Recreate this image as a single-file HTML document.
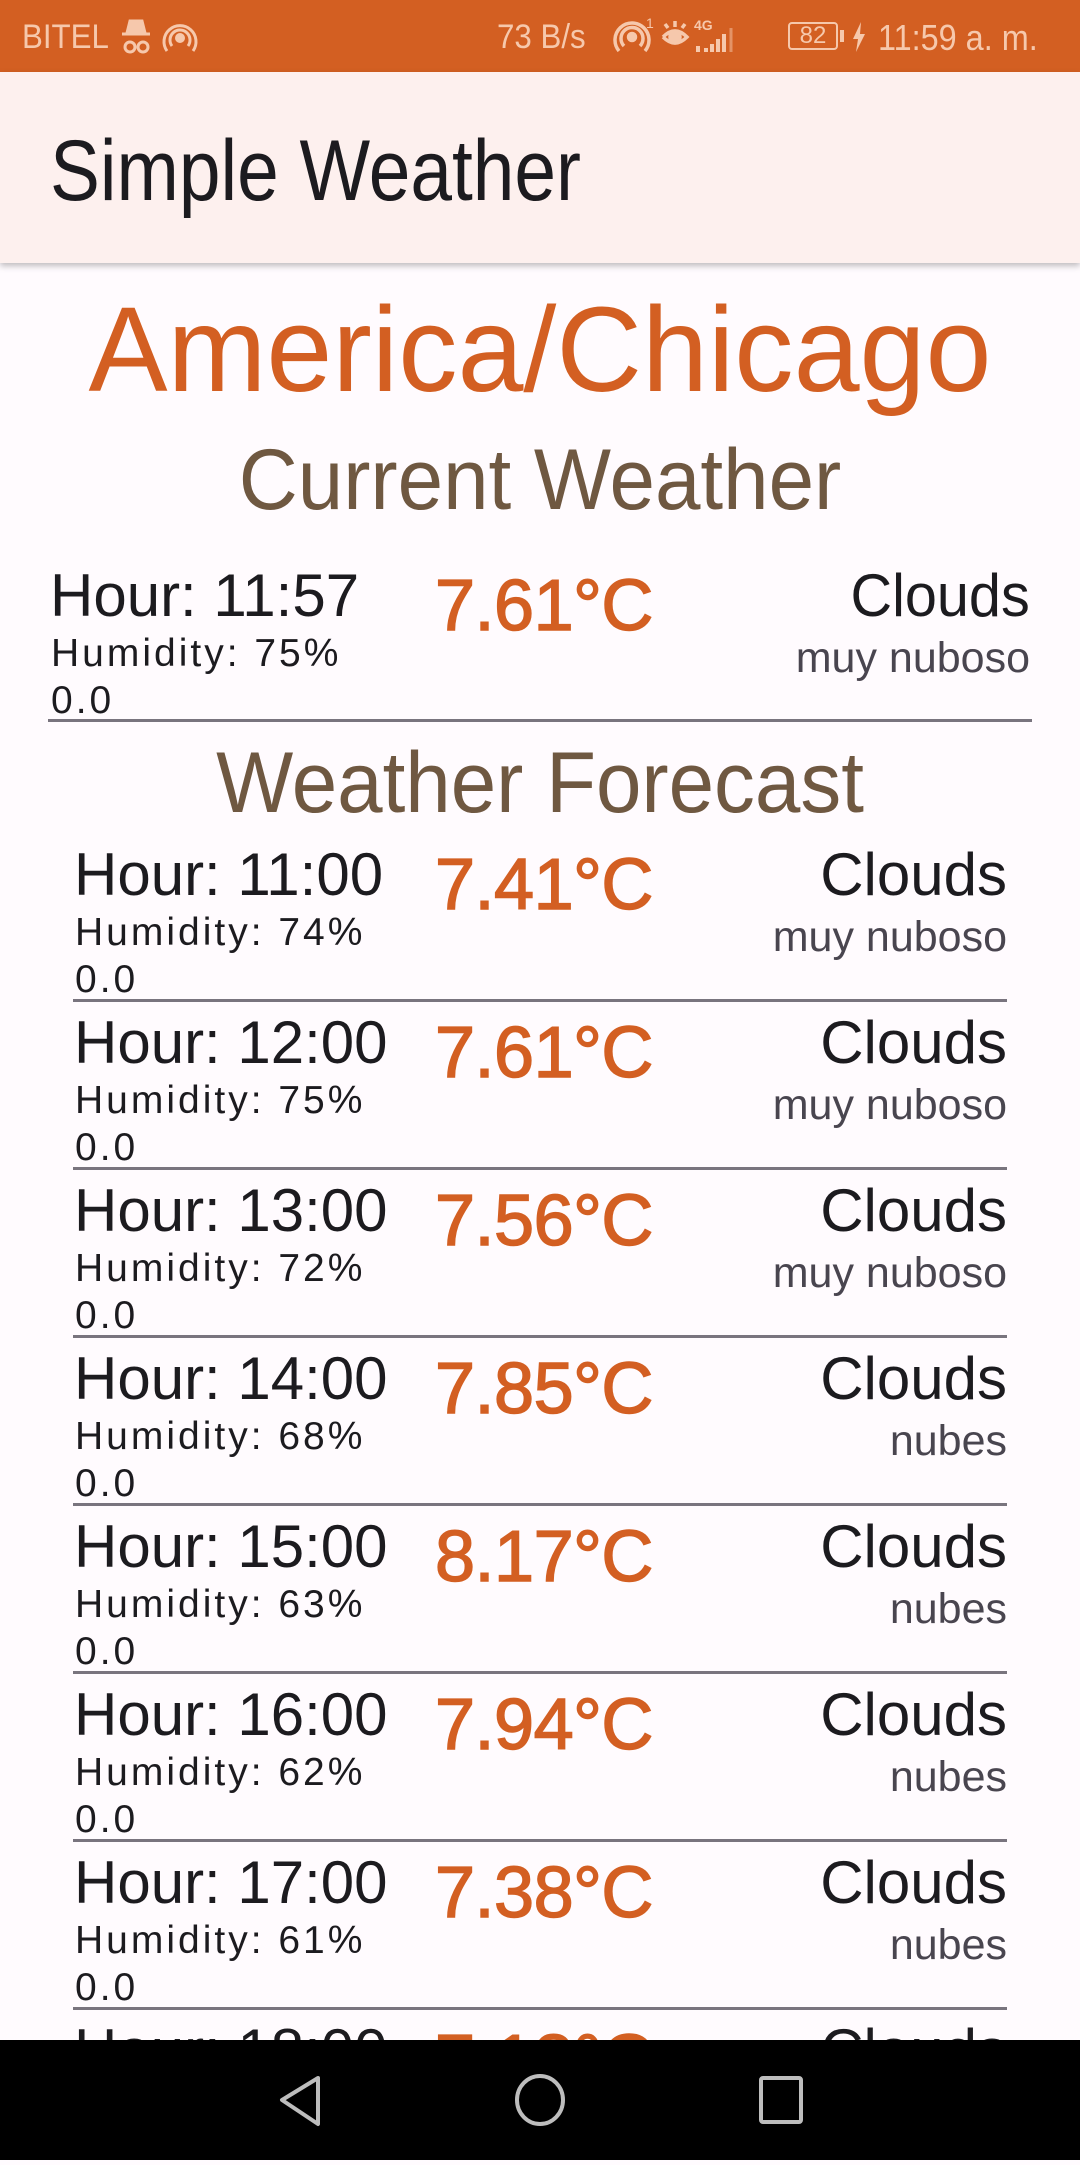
<!DOCTYPE html>
<html><head><meta charset="utf-8"><style>
*{margin:0;padding:0;box-sizing:border-box}
body{width:1080px;height:2160px;position:relative;overflow:hidden;background:#FFFBFE;font-family:"Liberation Sans",sans-serif}
.a{position:absolute;line-height:1;white-space:nowrap}
.sb{position:absolute;left:0;top:0;width:1080px;height:72px;background:#D35F22;color:#F6C8AC}
.ab{position:absolute;left:0;top:72px;width:1080px;height:191px;background:#FDF0EE;box-shadow:0 3px 6px rgba(0,0,0,.25)}
.h{font-size:60px;color:#1C1B1F}
.hum{font-size:39px;color:#1C1B1F;letter-spacing:3px}
.t{font-size:72px;color:#D35F22;-webkit-text-stroke:1.5px #D35F22;letter-spacing:-0.5px}
.d{font-size:43px;color:#49454F}
.ln{position:absolute;height:3px;background:#79747E}
.c{left:0;width:1080px;text-align:center}
.nav{position:absolute;left:0;top:2040px;width:1080px;height:120px;background:#000}
</style></head><body>
<div class="sb">
<div class="a" style="left:22px;top:20px;font-size:34px;transform:scaleX(.92);transform-origin:left">BITEL</div>
<svg class="a" style="left:118px;top:16px" width="84" height="44" viewBox="0 0 84 44" fill="none" stroke="#F6C8AC" stroke-width="3"><path d="M4 18h28M9 17l3-12h12l3 12" fill="#F6C8AC"/><circle cx="12" cy="31" r="5"/><circle cx="25" cy="31" r="5"/><circle cx="62" cy="22" r="3.5" fill="#F6C8AC"/><path d="M54 30a10 10 0 1 1 16 0M49 35a16 16 0 1 1 26 0"/></svg>
<div class="a" style="left:497px;top:20px;font-size:34px;transform:scaleX(.92);transform-origin:left">73 B/s</div>
<svg class="a" style="left:612px;top:14px" width="180" height="44" viewBox="0 0 180 44" fill="none" stroke="#F6C8AC" stroke-width="3.5"><circle cx="20" cy="23" r="3.5" fill="#F6C8AC"/><path d="M12 32a11 11 0 1 1 16 0M7 37a17 17 0 1 1 26 0"/><text x="34" y="14" font-size="14" fill="#F6C8AC" stroke="none" font-family="Liberation Sans">1</text><path d="M51 23q12-12 24 0q-12 12-24 0M53 10l3 4M63 7v6M73 10l-3 4"/><circle cx="63" cy="23" r="5" fill="#F6C8AC"/><text x="82" y="16" font-size="14" fill="#F6C8AC" stroke="none" font-weight="bold" font-family="Liberation Sans">4G</text><path d="M86 38v-6M94 38v-4M100 38v-8M106 38v-13M112 38v-18" stroke-width="4"/><path d="M119 38v-24" stroke-width="3" opacity=".5"/></svg>
<div class="a" style="left:788px;top:22px;width:50px;height:28px;border:2px solid #F6C8AC;border-radius:4px;font-size:24px;text-align:center;line-height:24px">82</div>
<div class="a" style="left:840px;top:30px;width:4px;height:12px;background:#F6C8AC"></div>
<svg class="a" style="left:852px;top:22px" width="14" height="30" viewBox="0 0 14 30"><path d="M9 0L1 17h5L4 30l9-18H8z" fill="#F6C8AC"/></svg>
<div class="a" style="left:878px;top:20px;font-size:36px;transform:scaleX(.9);transform-origin:left">11:59 a. m.</div>
</div>
<div class="ab"><div class="a" style="left:50px;top:56px;font-size:86px;color:#1C1B1F;transform:scaleX(.87);transform-origin:left">Simple Weather</div></div>

<div class="a c" style="top:289px;font-size:121px;color:#D35F22;transform:scaleX(.98)">America/Chicago</div>
<div class="a c" style="top:437px;font-size:86px;color:#6F5841;transform:scaleX(.95)">Current Weather</div>

<div class="a h" style="left:50px;top:566px">Hour: 11:57</div>
<div class="a hum" style="left:51px;top:634px">Humidity: 75%</div>
<div class="a hum" style="left:51px;top:681px">0.0</div>
<div class="a t" style="left:435px;top:570px">7.61°C</div>
<div class="a h" style="right:50px;top:566px;transform:scaleX(.96);transform-origin:right">Clouds</div>
<div class="a d" style="right:50px;top:637px">muy nuboso</div>
<div class="ln" style="left:48px;width:984px;top:719px"></div>

<div class="a c" style="top:740px;font-size:86px;color:#6F5841;transform:scaleX(.95)">Weather Forecast</div>

<div class="a h" style="left:74px;top:845px">Hour: 11:00</div><div class="a hum" style="left:75px;top:913px">Humidity: 74%</div><div class="a hum" style="left:75px;top:960px">0.0</div><div class="a t" style="left:435px;top:849px">7.41°C</div><div class="a h" style="right:73px;top:845px">Clouds</div><div class="a d" style="right:73px;top:916px">muy nuboso</div><div class="ln" style="left:73px;width:934px;top:999px"></div>

<div class="a h" style="left:74px;top:1013px">Hour: 12:00</div><div class="a hum" style="left:75px;top:1081px">Humidity: 75%</div><div class="a hum" style="left:75px;top:1128px">0.0</div><div class="a t" style="left:435px;top:1017px">7.61°C</div><div class="a h" style="right:73px;top:1013px">Clouds</div><div class="a d" style="right:73px;top:1084px">muy nuboso</div><div class="ln" style="left:73px;width:934px;top:1167px"></div>

<div class="a h" style="left:74px;top:1181px">Hour: 13:00</div><div class="a hum" style="left:75px;top:1249px">Humidity: 72%</div><div class="a hum" style="left:75px;top:1296px">0.0</div><div class="a t" style="left:435px;top:1185px">7.56°C</div><div class="a h" style="right:73px;top:1181px">Clouds</div><div class="a d" style="right:73px;top:1252px">muy nuboso</div><div class="ln" style="left:73px;width:934px;top:1335px"></div>

<div class="a h" style="left:74px;top:1349px">Hour: 14:00</div><div class="a hum" style="left:75px;top:1417px">Humidity: 68%</div><div class="a hum" style="left:75px;top:1464px">0.0</div><div class="a t" style="left:435px;top:1353px">7.85°C</div><div class="a h" style="right:73px;top:1349px">Clouds</div><div class="a d" style="right:73px;top:1420px">nubes</div><div class="ln" style="left:73px;width:934px;top:1503px"></div>

<div class="a h" style="left:74px;top:1517px">Hour: 15:00</div><div class="a hum" style="left:75px;top:1585px">Humidity: 63%</div><div class="a hum" style="left:75px;top:1632px">0.0</div><div class="a t" style="left:435px;top:1521px">8.17°C</div><div class="a h" style="right:73px;top:1517px">Clouds</div><div class="a d" style="right:73px;top:1588px">nubes</div><div class="ln" style="left:73px;width:934px;top:1671px"></div>

<div class="a h" style="left:74px;top:1685px">Hour: 16:00</div><div class="a hum" style="left:75px;top:1753px">Humidity: 62%</div><div class="a hum" style="left:75px;top:1800px">0.0</div><div class="a t" style="left:435px;top:1689px">7.94°C</div><div class="a h" style="right:73px;top:1685px">Clouds</div><div class="a d" style="right:73px;top:1756px">nubes</div><div class="ln" style="left:73px;width:934px;top:1839px"></div>

<div class="a h" style="left:74px;top:1853px">Hour: 17:00</div><div class="a hum" style="left:75px;top:1921px">Humidity: 61%</div><div class="a hum" style="left:75px;top:1968px">0.0</div><div class="a t" style="left:435px;top:1857px">7.38°C</div><div class="a h" style="right:73px;top:1853px">Clouds</div><div class="a d" style="right:73px;top:1924px">nubes</div><div class="ln" style="left:73px;width:934px;top:2007px"></div>

<div class="a h" style="left:74px;top:2021px">Hour: 18:00</div><div class="a t" style="left:435px;top:2025px">7.18°C</div><div class="a h" style="right:73px;top:2021px">Clouds</div>

<div class="nav">
<svg width="1080" height="120" viewBox="0 0 1080 120" fill="none" stroke="#BDBDBD" stroke-width="4" stroke-linejoin="round"><path d="M318 38L282 60l36 24z"/><ellipse cx="540" cy="60" rx="23" ry="24"/><rect x="761" y="38" width="40" height="44" rx="2"/></svg>
</div>
</body></html>
